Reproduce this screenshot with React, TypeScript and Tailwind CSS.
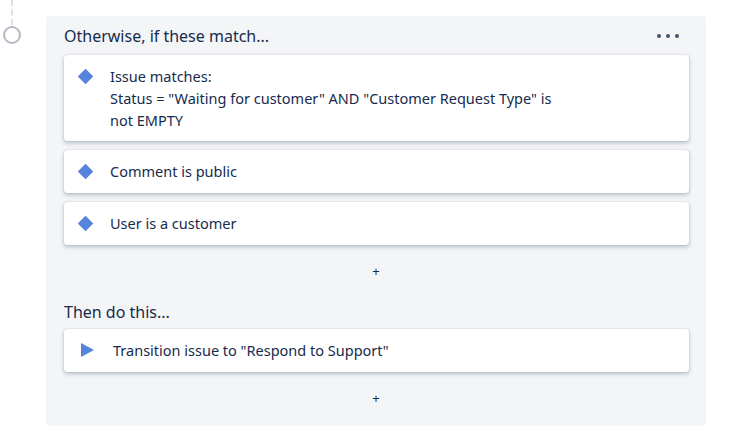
import { ReactNode } from "react";

const Diamond = () => (
  <span className="mt-[6px] ml-[-1px] block h-[11px] w-[11px] shrink-0 rotate-45 bg-[#5584dc]" />
);

const Triangle = () => (
  <svg width="13" height="14" viewBox="0 0 13 14" className="mt-[4px] shrink-0">
    <path d="M0 0 L13 7 L0 14 Z" fill="#5584dc" />
  </svg>
);

const Card = ({ icon, children, textGap }: { icon: ReactNode; children: ReactNode; textGap: string }) => (
  <div className="flex min-h-[43px] items-start rounded-[3px] bg-white pt-[10px] pb-[10px] pl-[17px] pr-4 shadow-[0_2px_4px_rgba(9,30,66,0.25),0_0_1px_rgba(9,30,66,0.31)]">
    {icon}
    <div className={`${textGap} text-[14.5px] leading-[22px] text-[#172b4d]`}>{children}</div>
  </div>
);

const AddButton = () => (
  <div className="flex justify-center text-[13px] leading-[20px] text-[#172b4d]">+</div>
);

export default function App() {
  return (
    <div className="relative h-[442px] w-[739px] bg-white font-['Segoe_UI','Noto_Sans',sans-serif]">
      {/* timeline */}
      <div className="absolute left-[11px] top-0 h-[25px] border-l-2 border-dashed border-[#dfe1e6]" />
      <div className="absolute left-[3px] top-[26px] h-[18px] w-[18px] rounded-full border-2 border-[#b3bac5] bg-white" />

      <div className="absolute left-[46px] top-[16px] w-[660px] rounded-[4px] bg-[#f4f5f7] px-[18px] pb-[18px] pt-[8px]">
        <div className="flex items-center justify-between pr-[9px]">
          <h2 className="text-[16px] leading-[24px] text-[#172b4d]">Otherwise, if these match...</h2>
          <div className="flex gap-[5px]">
            <span className="h-[4px] w-[4px] rounded-full bg-[#42526e]" />
            <span className="h-[4px] w-[4px] rounded-full bg-[#42526e]" />
            <span className="h-[4px] w-[4px] rounded-full bg-[#42526e]" />
          </div>
        </div>

        <div className="mt-[7px] flex w-[625px] flex-col gap-[9px]">
          <Card icon={<Diamond />} textGap="ml-[19px]">
            <div>Issue matches:</div>
            <div>Status = "Waiting for customer" AND "Customer Request Type" is</div>
            <div>not EMPTY</div>
          </Card>
          <Card icon={<Diamond />} textGap="ml-[19px]">
            Comment is public
          </Card>
          <Card icon={<Diamond />} textGap="ml-[19px]">
            User is a customer
          </Card>
        </div>

        <div className="mt-[16px]">
          <AddButton />
        </div>

        <h2 className="mt-[19px] text-[16px] leading-[24px] text-[#172b4d]">Then do this...</h2>

        <div className="mt-[5px] w-[625px]">
          <Card icon={<Triangle />} textGap="ml-[19px]">
            Transition issue to "Respond to Support"
          </Card>
        </div>

        <div className="mt-[16px]">
          <AddButton />
        </div>
      </div>
    </div>
  );
}
